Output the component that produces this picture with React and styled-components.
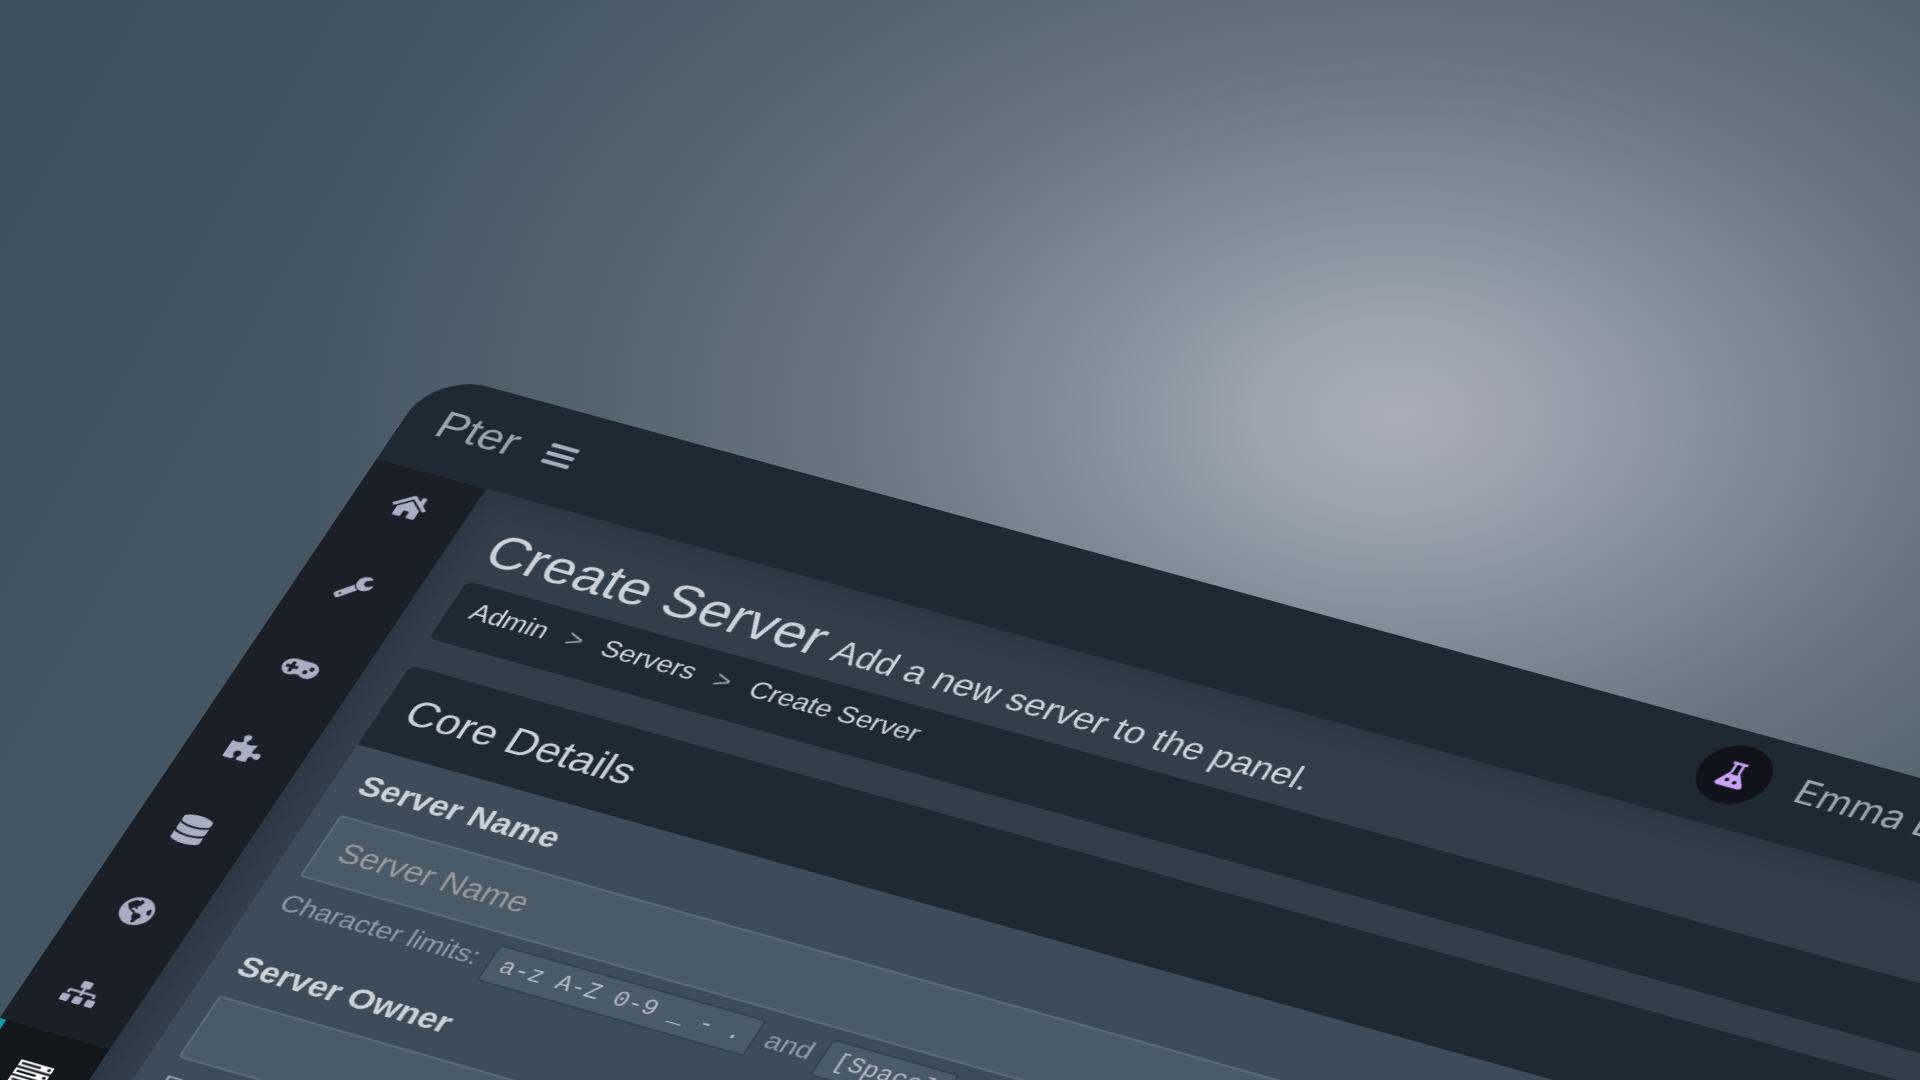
import styled, { createGlobalStyle } from "styled-components"
import {
  FaBars, FaHome, FaPuzzlePiece, FaDatabase,
  FaGlobeAmericas, FaSitemap,
} from "react-icons/fa"

// page points and where they land in the picture -> least squares fit of one matrix3d
const fitHomography = (pairs) => {
  const k = 1000
  const rows = []
  pairs.forEach(([px, py, pu, pv]) => {
    const [x, y, u, v] = [px / k, py / k, pu / k, pv / k]
    rows.push([x, y, 1, 0, 0, 0, -x * u, -y * u, u])
    rows.push([0, 0, 0, x, y, 1, -x * v, -y * v, v])
  })
  const m = Array.from({ length: 8 }, () => new Array(9).fill(0))
  rows.forEach((row) => {
    for (let i = 0; i < 8; i++) for (let j = 0; j < 9; j++) m[i][j] += row[i] * row[j]
  })
  for (let i = 0; i < 8; i++) {
    let pivot = i
    for (let r = i + 1; r < 8; r++) if (Math.abs(m[r][i]) > Math.abs(m[pivot][i])) pivot = r
    ;[m[i], m[pivot]] = [m[pivot], m[i]]
    for (let r = 0; r < 8; r++) {
      if (r === i) continue
      const f = m[r][i] / m[i][i]
      for (let c = i; c < 9; c++) m[r][c] -= f * m[i][c]
    }
  }
  const [a, b, c, d, e, f, g, h] = m.map((row, i) => row[8] / row[i])
  return `matrix3d(${a},${d},0,${g / k},${b},${e},0,${h / k},0,0,1,0,${c * k},${f * k},0,1)`
}

const panelTransform = fitHomography([
  [0, 0, 432, 375],
  [0, 0, 432, 375],
  [148, 0, 765, 464],
  [296, 0, 1094, 552],
  [592, 0, 1764, 734],
  [50, 50, 485, 488],
  [25, 72, 407, 508],
  [25, 116, 353, 586],
  [25, 160, 304, 667],
  [25, 204, 247, 742],
  [25, 248, 195, 825],
  [25, 292, 141, 907],
  [25, 336, 83, 993],
  [50, 358, 113, 1053],
  [66.5, 96, 463, 580],
  [66.5, 128, 432, 633],
  [66.5, 143, 408, 667],
  [66.5, 187, 358, 745],
  [592, 25, 1735, 775],
  [592, 50, 1706, 820],
  [592, 96, 1648, 906.5],
  [592, 128, 1610, 964],
  [592, 143, 1589, 996],
  [592, 187, 1534, 1080],
])

const GlobalStyle = createGlobalStyle`
  html, body { margin: 0; height: 100%; overflow: hidden; }
  body { font-family: "Liberation Sans", Arial, sans-serif; }
`

const Stage = styled.div`
  position: relative;
  width: 1920px;
  height: 1080px;
  overflow: hidden;
  background:
    radial-gradient(circle 240px at 1610px 440px, rgba(150, 140, 170, 0.1) 0%, rgba(150, 140, 170, 0) 100%),
    radial-gradient(ellipse 1120px 730px at 1400px 415px, #a8afba 0%, #9aa3ae 13%, #818c98 30%, #687580 50%, #55636e 72%, rgba(75, 90, 102, 0) 100%),
    linear-gradient(120deg, #3f505d 0%, #4c5b68 50%, #54616d 100%);
`

// laid out at double size and scaled back, so the text stays sharp under the tilt
const Scene = styled.div`
  position: absolute;
  left: 0;
  top: 0;
  transform-origin: 0 0;
  transform: ${panelTransform} scale(0.5);
`

const Panel = styled.div`
  zoom: 2;
  width: 1000px;
  height: 800px;
  display: grid;
  grid-template-columns: 50px 1fr;
  grid-template-rows: 50px 1fr;
  clip-path: inset(1.5px 0 0 0 round 24px);
  background: #323f4b;
  color: #cbd2d9;
`

const Header = styled.header`
  grid-column: 1 / 3;
  display: grid;
  grid-template-columns: 577px 1fr;
  align-items: center;
  background: #1f2933;
`

const Brand = styled.div`
  display: flex;
  align-items: center;
  padding-left: 15px;
  gap: 8px;
`

const Logo = styled.span`
  font-size: 19.5px;
  color: #9aa5b1;
  width: 40px;
`

const Toggle = styled(FaBars)`
  width: 14px;
  height: 14px;
  color: #a7aec0;
`

const UserNav = styled.div`
  display: flex;
  align-items: center;
  gap: 12px;
  margin-top: -3px;
`

const Avatar = styled.span`
  display: flex;
  align-items: center;
  justify-content: center;
  width: 30px;
  height: 30px;
  border-radius: 50%;
  background: #12121c;
  color: #c9a3f5;
`

const Flask = styled.svg`
  width: 15px;
  height: 15px;
  fill: currentColor;
`

const UserName = styled.span`
  font-family: Inter, sans-serif;
  font-size: 16px;
  margin-bottom: 2px;
  color: #9aa5b1;
`

const Sidebar = styled.nav`
  display: flex;
  flex-direction: column;
  background: #1a2028;
`

const NavItem = styled.a`
  display: flex;
  align-items: center;
  justify-content: center;
  height: 45px;
  flex: none;
  box-sizing: border-box;
  font-size: 15px;
  color: ${(p) => (p.$active ? "#ffffff" : "#a9afc2")};
  background: ${(p) => (p.$active ? "#14171c" : "transparent")};
  border-left: ${(p) => (p.$active ? "3px solid #0e9ea8" : "0")};
  &:first-child {
    height: 41px;
    padding-bottom: 4px;
  }
`

const Content = styled.main`
  min-width: 0;
  box-shadow: inset 8px 8px 14px -6px rgba(20, 28, 36, 0.35);
`

const PageHead = styled.h1`
  margin: 0;
  padding: 11px 15px 0 17px;
  height: 35px;
  font-size: 24.3px;
  font-weight: 400;
  line-height: 33px;
  color: #cbd2d9;
  white-space: nowrap;
`

const Subtitle = styled.small`
  font-size: 15.6px;
  margin-left: 6px;
`

const Crumbs = styled.ol`
  display: flex;
  align-items: center;
  box-sizing: border-box;
  height: 32px;
  margin: 0 15px 15px 16.5px;
  padding: 0 10px 5px 9.5px;
  list-style: none;
  border-radius: 3px;
  background: #1f2933;
  font-size: 12.1px;
  color: #cbd2d9;
`

const Sep = styled.li`
  padding: 0 9px;
  color: #9aa5b1;
`

const Box = styled.section`
  margin: 0 15px 0 16.5px;
  border-radius: 3px;
  overflow: hidden;
  background: #3e4c59;
`

const BoxHead = styled.h3`
  margin: 0;
  height: 44px;
  padding: 0 11px;
  font-size: 18.5px;
  font-weight: 400;
  line-height: 44px;
  background: #1f2933;
  color: #cbd2d9;
`

const BoxBody = styled.div`
  padding: 8px 10.5px 10px 11.5px;
`

const Field = styled.div`
  margin-bottom: 13.5px;
`

const Label = styled.label`
  display: block;
  font-size: 14.6px;
  font-weight: 700;
  line-height: 20px;
  margin-bottom: 7px;
  color: #cbd2d9;
`

const Input = styled.input`
  display: block;
  width: 100%;
  height: 34px;
  box-sizing: border-box;
  padding: 0 8.5px;
  border: 1px solid #5b6976;
  border-radius: 2px;
  outline: none;
  background: #4b5a67;
  font: 14.3px "Liberation Sans", Arial, sans-serif;
  color: #cbd2d9;
  &::placeholder { color: #979a9e; opacity: 1; }
`

const Help = styled.p`
  margin: 4px 0 0;
  font-size: 12.3px;
  line-height: 20px;
  color: #8e9aa6;
`

const Code = styled.code`
  font-family: "Liberation Mono", monospace;
  font-size: 10.6px;
  padding: 3px 5px;
  margin: 0 1px;
  border: 1px solid #36434f;
  border-radius: 2px;
  background: #4b5a67;
  color: #b3bcc6;
`

const Glyph = styled.svg`
  width: ${(p) => p.$w || 15}px;
  height: 15px;
  fill: currentColor;
`

const WrenchIcon = () => (
  <Glyph viewBox="0 0 1792 1792">
    <path d="M448 1472q0-26-19-45t-45-19-45 19-19 45 19 45 45 19 45-19 19-45zm644-420l-682 682q-37 37-90 37-52 0-91-37l-106-108q-38-36-38-90 0-53 38-91l681-681q39 98 114.5 173.5t173.5 114.5zm634-435q0 39-23 106-47 134-164.5 217.5t-258.5 83.5q-185 0-316.5-131.5t-131.5-316.5 131.5-316.5 316.5-131.5q58 0 121.5 16.5t107.5 46.5q16 11 16 28t-16 28l-293 169v224l193 107q5-3 79-48.5t135.5-81 70.5-35.5q15 0 23.5 10t8.5 25z" />
  </Glyph>
)

const GamepadIcon = () => (
  <Glyph viewBox="0 0 1920 1792" $w={16}>
    <path d="M832 1024v-128q0-14-9-23t-23-9h-192v-192q0-14-9-23t-23-9h-128q-14 0-23 9t-9 23v192h-192q-14 0-23 9t-9 23v128q0 14 9 23t23 9h192v192q0 14 9 23t23 9h128q14 0 23-9t9-23v-192h192q14 0 23-9t9-23zm576 64q0-53-37.5-90.5t-90.5-37.5-90.5 37.5-37.5 90.5 37.5 90.5 90.5 37.5 90.5-37.5 37.5-90.5zm256-256q0-53-37.5-90.5t-90.5-37.5-90.5 37.5-37.5 90.5 37.5 90.5 90.5 37.5 90.5-37.5 37.5-90.5zm256 128q0 212-150 362t-362 150q-192 0-338-128h-220q-146 128-338 128-212 0-362-150t-150-362 150-362 362-150h896q212 0 362 150t150 362z" />
  </Glyph>
)

const ServerIcon = () => (
  <Glyph viewBox="0 0 1792 1792">
    <path d="M128 1408h1024v-128h-1024v128zm0-512h1024v-128h-1024v128zm1568 448q0-40-28-68t-68-28-68 28-28 68 28 68 68 28 68-28 28-68zm-1568-960h1024v-128h-1024v128zm1568 448q0-40-28-68t-68-28-68 28-28 68 28 68 68 28 68-28 28-68zm0-512q0-40-28-68t-68-28-68 28-28 68 28 68 68 28 68-28 28-68zm96 832v384h-1792v-384h1792zm0-512v384h-1792v-384h1792zm0-512v384h-1792v-384h1792z" />
  </Glyph>
)

const FlaskIcon = () => (
  <Flask viewBox="0 0 24 24">
    <path d="M7 2h10v2h-1.500v6.500L21 19.500c.8 1.500-.2 3-1.800 3H4.800c-1.600 0-2.600-1.500-1.800-3L8.500 10.500V4H7zM10.300 4v6.500l-1 1.700h5.400l-1-1.700V4zM9.500 15.500a1.500 1.500 0 1 0 0 3 1.500 1.500 0 0 0 0-3zM15 16.500a1.500 1.500 0 1 0 0 3 1.500 1.500 0 0 0 0-3z" fillRule="evenodd" />
  </Flask>
)

const navIcons = [FaHome, WrenchIcon, GamepadIcon, FaPuzzlePiece, FaDatabase, FaGlobeAmericas, FaSitemap]

const App = () => {
  return (
    <Stage>
      <GlobalStyle />
      <Scene>
        <Panel>
          <Header>
            <Brand>
              <Logo>Pter</Logo>
              <Toggle />
            </Brand>
            <UserNav>
              <Avatar><FlaskIcon /></Avatar>
              <UserName>Emma Lee</UserName>
            </UserNav>
          </Header>
          <Sidebar>
            {navIcons.map((Icon, i) => (
              <NavItem key={i}><Icon /></NavItem>
            ))}
            <NavItem $active><ServerIcon /></NavItem>
          </Sidebar>
          <Content>
            <PageHead>
              Create Server<Subtitle>Add a new server to the panel.</Subtitle>
            </PageHead>
            <Crumbs>
              <li>Admin</li>
              <Sep>&gt;</Sep>
              <li>Servers</li>
              <Sep>&gt;</Sep>
              <li>Create Server</li>
            </Crumbs>
            <Box>
              <BoxHead>Core Details</BoxHead>
              <BoxBody>
                <Field>
                  <Label>Server Name</Label>
                  <Input placeholder="Server Name" />
                  <Help>
                    Character limits: <Code>a-z A-Z 0-9 _ - .</Code> and <Code>[Space]</Code>.
                  </Help>
                </Field>
                <Field>
                  <Label>Server Owner</Label>
                  <Input />
                  <Help>Email address of the Server Owner.</Help>
                </Field>
              </BoxBody>
            </Box>
          </Content>
        </Panel>
      </Scene>
    </Stage>
  )
}

export default App
